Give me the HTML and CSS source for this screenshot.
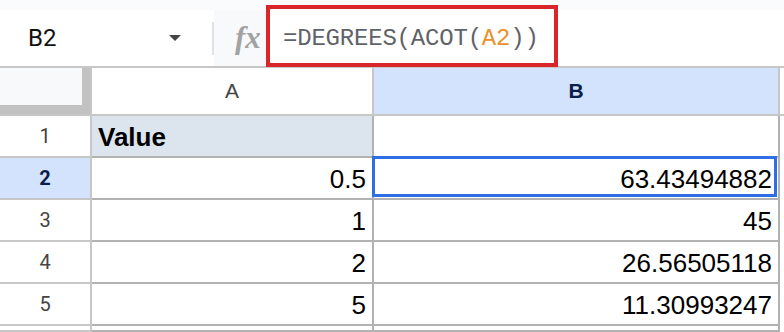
FILE: index.html
```html
<!DOCTYPE html>
<html lang="en">
<head>
    <meta charset="UTF-8">
    <meta name="viewport" content="width=device-width, initial-scale=1.0">
    <title>DEGREES(ACOT)</title>
    <link rel="stylesheet" href="styles.css">
</head>
<body>
    <div class="top"></div>
    <div class="toolbar">
        <div class="namebox">
            <span class="ref">B2</span>
            <span class="caret"></span>
            <span class="sep"></span>
        </div>
        <div class="fx">fx</div>
        <div class="formula">=DEGREES(ACOT(<span class="arg">A2</span>))</div>
        <div class="mark"></div>
    </div>

    <div class="sheet">
        <div class="corner"><div class="freeze"></div></div>
        <div class="colhead">A</div>
        <div class="colhead active">B</div>
        <div class="rest head"></div>

        <div class="rowhead">1</div>
        <div class="cell label">Value</div>
        <div class="cell"></div>
        <div class="rest"></div>

        <div class="rowhead active">2</div>
        <div class="cell">0.5</div>
        <div class="cell selected">63.43494882</div>
        <div class="rest"></div>

        <div class="rowhead">3</div>
        <div class="cell">1</div>
        <div class="cell">45</div>
        <div class="rest"></div>

        <div class="rowhead">4</div>
        <div class="cell">2</div>
        <div class="cell">26.56505118</div>
        <div class="rest"></div>

        <div class="rowhead">5</div>
        <div class="cell">5</div>
        <div class="cell">11.30993247</div>
        <div class="rest"></div>

        <div class="rowhead"></div>
        <div class="cell"></div>
        <div class="cell"></div>
        <div class="rest"></div>
    </div>
</body>
</html>
```

FILE: styles.css
```css
* {
    margin: 0;
    padding: 0;
    box-sizing: border-box;
}

body {
    font-family: Roboto, "Liberation Sans", Arial, sans-serif;
    background-color: white;
    width: 784px;
    height: 332px;
    overflow: hidden;
}

.top {
    height: 10px;
    background-color: #f9fbfd;
}

/* formula bar */
.toolbar {
    position: relative;
    display: flex;
    height: 58px;
    border-bottom: 2px solid #c7c7c7;
}

.namebox {
    display: flex;
    align-items: center;
    width: 214px;
    padding-left: 28px;
    background-color: white;
}

.ref {
    font-size: 24px;
    color: #111;
}

.caret {
    margin-left: 113px;
    border-left: 6px solid transparent;
    border-right: 6px solid transparent;
    border-top: 6px solid #444;
}

.sep {
    margin-left: auto;
    width: 2px;
    height: 33px;
    background-color: #dde3ea;
}

.fx {
    display: flex;
    align-items: center;
    width: 56px;
    padding-left: 21px;
    background-color: #f8f9fa;
    font-family: "Liberation Serif", serif;
    font-style: italic;
    font-weight: bold;
    font-size: 31px;
    color: #a2a2a2;
}

.formula {
    flex: 1;
    display: flex;
    align-items: center;
    padding-left: 13px;
    background-color: white;
    font-family: "Liberation Mono", "DejaVu Sans Mono", monospace;
    font-size: 24px;
    letter-spacing: -0.2px;
    color: #5f6368;
}

.arg {
    color: #e8912d;
}

.mark {
    position: absolute;
    left: 266px;
    top: -5px;
    width: 292px;
    height: 62px;
    border: 4px solid #d9262b;
}

/* grid */
.sheet {
    display: grid;
    grid-template-columns: 92px 282px 406px 1fr;
    grid-template-rows: 48px repeat(5, 42px) 6px;
}

.corner {
    border-right: 2px solid #c7c7c7;
    border-bottom: 2px solid #c7c7c7;
}

.freeze {
    height: 46px;
    background-color: #f8f9fa;
    border-right: 8px solid #c2c2c2;
    border-bottom: 9px solid #c2c2c2;
}

.colhead {
    display: flex;
    align-items: center;
    justify-content: center;
    font-family: "Liberation Sans", Arial, sans-serif;
    font-size: 21px;
    color: #444;
    border-right: 2px solid #c7c7c7;
    border-bottom: 2px solid #c7c7c7;
}

.rowhead {
    display: flex;
    align-items: center;
    justify-content: center;
    font-size: 20px;
    color: #444;
    border-right: 2px solid #c7c7c7;
    border-bottom: 2px solid #c7c7c7;
}

.active {
    background-color: #d3e3fd;
    color: #0b1d4a;
    font-weight: bold;
}

.rest.head {
    border-bottom: 2px solid #c7c7c7;
}

.cell {
    position: relative;
    font-family: "Liberation Sans", Arial, sans-serif;
    font-size: 26px;
    line-height: 42px;
    text-align: right;
    padding-right: 6px;
    color: black;
    border-right: 2px solid #b2b2b2;
    border-bottom: 2px solid #b2b2b2;
}

.cell.label {
    text-align: left;
    padding-left: 6px;
    font-weight: bold;
    background-color: #dce4ee;
}

.cell.selected::after {
    content: "";
    position: absolute;
    top: -2px;
    left: -2px;
    right: 1px;
    bottom: 1px;
    border: 3px solid #2f6fe4;
}
```
